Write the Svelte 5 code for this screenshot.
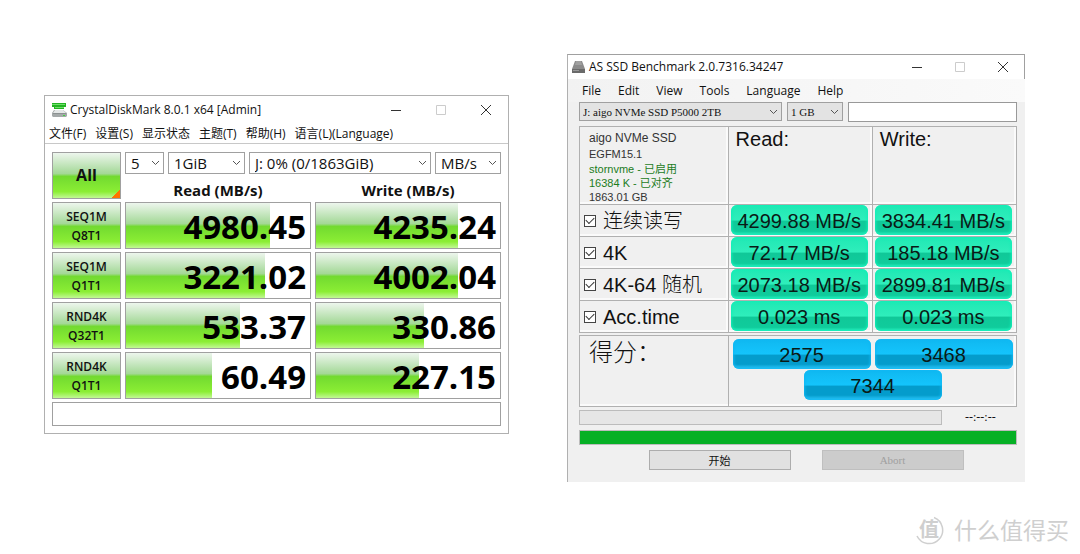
<script>
	let tests = $state([
		{ name: 'SEQ1M', queue: 'Q8T1', read: '4980.45', readBar: 78.3, write: '4235.24', writeBar: 77.4 },
		{ name: 'SEQ1M', queue: 'Q1T1', read: '3221.02', readBar: 75.5, write: '4002.04', writeBar: 77 },
		{ name: 'RND4K', queue: 'Q32T1', read: '533.37', readBar: 62, write: '330.86', writeBar: 58.5 },
		{ name: 'RND4K', queue: 'Q1T1', read: '60.49', readBar: 46.5, write: '227.15', writeBar: 56 }
	]);

	let rows = $state([
		{ id: 'seq', label: '连续读写', read: '4299.88 MB/s', write: '3834.41 MB/s', on: true },
		{ id: '4k', label: '4K', read: '72.17 MB/s', write: '185.18 MB/s', on: true },
		{ id: '4k64', label: '4K-64 随机', read: '2073.18 MB/s', write: '2899.81 MB/s', on: true },
		{ id: 'acc', label: 'Acc.time', read: '0.023 ms', write: '0.023 ms', on: true }
	]);

	const cdmMenu = ['文件(F)', '设置(S)', '显示状态', '主题(T)', '帮助(H)', '语言(L)(Language)'];
	const asMenu = ['File', 'Edit', 'View', 'Tools', 'Language', 'Help'];
</script>

{#snippet dropdown(cls, label, value)}
	<span class="dropdown {cls}">
		<select aria-label={label}>
			<option>{value}</option>
		</select>
		<svg width="9" height="6" viewBox="0 0 9 6" aria-hidden="true">
			<path d="M1 1l3.5 3.5L8 1" fill="none" stroke="#555" />
		</svg>
	</span>
{/snippet}

{#snippet windowButtons()}
	<div class="controls">
		<button aria-label="Minimize">
			<svg width="12" height="12" viewBox="0 0 12 12"><path d="M1 6.5h10" stroke="#333" /></svg>
		</button>
		<button aria-label="Maximize" disabled>
			<svg width="12" height="12" viewBox="0 0 12 12"><path d="M1.5 1.5h9v9h-9z" fill="none" stroke="#ccc" /></svg>
		</button>
		<button aria-label="Close">
			<svg width="12" height="12" viewBox="0 0 12 12"><path d="M1 1l10 10M11 1L1 11" stroke="#333" /></svg>
		</button>
	</div>
{/snippet}

<main>
	<div class="desktop">
		<section class="window cdm">
			<header class="titlebar">
				<svg class="logo" width="16" height="16" viewBox="0 0 16 16" aria-hidden="true">
					<path d="M1 1h14v4h-2v2H3V5H1z" fill="#22b422" />
					<path d="M1 2.500h13M4 5.500h9" stroke="#6fe06a" />
					<path d="M3 8h9l4 3v3l-1 1H2l-1-1v-3z" fill="#a4a9a9" />
					<path d="M4 8h8l3 3H2z" fill="#e4e7e7" />
					<path d="M2 11.500h13" stroke="#8b9191" />
					<path d="M12 13.500h2" stroke="#3dd43d" />
				</svg>
				<h1>CrystalDiskMark 8.0.1 x64 [Admin]</h1>
				{@render windowButtons()}
			</header>
			<nav class="menu">
				{#each cdmMenu as item}
					<button>{item}</button>
				{/each}
			</nav>
			<div class="grid">
				<button class="tile all">All</button>
				<div class="setup">
					<div class="selects">
						{@render dropdown('count', 'Test count', '5')}
						{@render dropdown('size', 'Test size', '1GiB')}
						{@render dropdown('drive', 'Drive', 'J: 0% (0/1863GiB)')}
						{@render dropdown('unit', 'Unit', 'MB/s')}
					</div>
					<div class="heads">
						<span>Read (MB/s)</span>
						<span>Write (MB/s)</span>
					</div>
				</div>
				{#each tests as test}
					<button class="tile">{test.name}<br />{test.queue}</button>
					<div class="meter">
						<div class="fill" style="width: {test.readBar}%"></div>
						<output>{test.read}</output>
					</div>
					<div class="meter">
						<div class="fill" style="width: {test.writeBar}%"></div>
						<output>{test.write}</output>
					</div>
				{/each}
				<input class="comment" aria-label="Comment" />
			</div>
		</section>

		<section class="window asssd">
			<header class="titlebar">
				<svg class="logo" width="15" height="14" viewBox="0 0 15 14" aria-hidden="true">
					<path d="M4 1h7l3 8H1z" fill="#8b8b8b" />
					<path d="M5 1h5l1 4H4z" fill="#a0a0a0" />
					<path d="M1 9h13v4H1z" fill="#6a6a6a" />
					<path d="M2 10.500h6" stroke="#999" />
				</svg>
				<h1>AS SSD Benchmark 2.0.7316.34247</h1>
				{@render windowButtons()}
			</header>
			<nav class="menu">
				{#each asMenu as item}
					<button>{item}</button>
				{/each}
			</nav>
			<div class="body">
				<div class="toolbar">
					{@render dropdown('disk', 'Disk', 'J: aigo NVMe SSD P5000 2TB')}
					{@render dropdown('amount', 'Size', '1 GB')}
					<input aria-label="Result" />
				</div>
				<table>
					<thead>
						<tr>
							<td class="info">
								<p class="model">aigo NVMe SSD</p>
								<p class="firmware">EGFM15.1</p>
								<p class="ok">stornvme - 已启用</p>
								<p class="ok">16384 K - 已对齐</p>
								<p>1863.01 GB</p>
							</td>
							<th>Read:</th>
							<th>Write:</th>
						</tr>
					</thead>
					<tbody>
						{#each rows as row}
							<tr>
								<td>
									<div class="check">
										<input type="checkbox" id={row.id} bind:checked={row.on} />
										<label for={row.id}>{row.label}</label>
									</div>
								</td>
								<td><div class="pill">{row.read}</div></td>
								<td><div class="pill">{row.write}</div></td>
							</tr>
						{/each}
					</tbody>
				</table>
				<div class="score">
					<h2>得分：</h2>
					<div class="points">
						<div class="pill blue">2575</div>
						<div class="pill blue">3468</div>
						<div class="pill blue">7344</div>
					</div>
				</div>
				<div class="progress">
					<div class="track"></div>
					<span>--:--:--</span>
				</div>
				<div class="track done"></div>
				<div class="actions">
					<button>开始</button>
					<button disabled>Abort</button>
				</div>
			</div>
		</section>
	</div>

	<footer>
		<span class="badge">
			<svg width="30" height="30" viewBox="0 0 30 30" aria-hidden="true">
				<path d="M20 2.500A13.500 13.500 0 1 1 3 21" fill="none" stroke="#cfcfcf" stroke-width="1.500" />
			</svg>
			<b>值</b>
		</span>
		<span>什么值得买</span>
	</footer>
</main>

<style>
	:global(body) {
		margin: 0;
		background: #fff;
	}

	main {
		font-family: 'Open Sans', 'Noto Sans CJK SC', sans-serif;
		color: #111;
	}

	main :global(*) {
		box-sizing: border-box;
	}

	button,
	input,
	select {
		margin: 0;
		padding: 0;
		font: inherit;
		color: inherit;
	}

	h1,
	h2,
	p {
		margin: 0;
		font-weight: 400;
	}

	.desktop {
		display: grid;
		grid-template-columns: 465fr 458fr;
		column-gap: 58px;
		align-items: start;
		padding: 54px 55px 0 44px;
	}

	/* ===== Window chrome ===== */
	.titlebar {
		display: flex;
		align-items: center;
		background: #fff;
	}

	.titlebar h1 {
		flex: 1;
		font-size: 12px;
		line-height: 20px;
		white-space: nowrap;
	}

	.logo {
		flex: none;
	}

	.controls {
		display: flex;
	}

	.controls button {
		display: grid;
		place-items: center;
		width: 43px;
		height: 22px;
		border: 0;
		background: none;
	}

	.menu {
		display: flex;
		font-size: 12px;
		line-height: 20px;
	}

	.menu button {
		border: 0;
		background: none;
		white-space: nowrap;
	}

	.dropdown {
		position: relative;
		display: block;
	}

	.dropdown select {
		display: block;
		width: 100%;
		height: 100%;
		padding-left: 5px;
		border: 1px solid #a0a0a0;
		border-radius: 0;
		background: #fff;
		appearance: none;
	}

	.dropdown svg {
		position: absolute;
		top: calc(50% - 3px);
		right: 4px;
		pointer-events: none;
	}

	/* ===== CrystalDiskMark ===== */
	.cdm {
		margin-top: 41px;
		border: 1px solid #b0b0b0;
		background: #fff;
	}

	.cdm .titlebar {
		height: 28px;
		padding: 0 1px 0 6px;
		gap: 3px;
	}

	.cdm .controls {
		gap: 2px;
	}

	.cdm .menu {
		height: 20px;
		padding-left: 4px;
		gap: 9px;
		border-bottom: 1px solid #c8c8c8;
	}

	.grid {
		display: grid;
		grid-template-columns: 69px 1fr 1fr;
		grid-template-rows: repeat(5, 47px) 24px;
		gap: 3px 4px;
		padding: 8px 7px 7px;
	}

	.tile {
		border: 1px solid #a0a0a0;
		background: linear-gradient(#edf6ed, #a3d896 46%, #72da30 52%, #8bee34 86%, #c2f895);
		font-size: 12px;
		font-weight: 600;
		line-height: 19px;
	}

	.all {
		background:
			linear-gradient(135deg, transparent 50%, #ff7300 50%) right bottom / 9px 9px no-repeat,
			linear-gradient(#edf6ed, #a3d896 46%, #72da30 52%, #8bee34 86%, #c2f895);
		font-size: 16px;
		font-weight: 700;
	}

	.setup {
		grid-column: span 2;
		display: flex;
		flex-direction: column;
	}

	.selects {
		display: flex;
		gap: 4px;
		height: 24px;
		font-size: 15px;
	}

	.count {
		width: 39px;
	}

	.size {
		width: 77px;
	}

	.drive {
		flex: 1;
	}

	.unit {
		width: 66px;
	}

	.heads {
		display: grid;
		grid-template-columns: 1fr 1fr;
		column-gap: 4px;
		padding-top: 4px;
		font-size: 15px;
		font-weight: 700;
		line-height: 24px;
		text-align: center;
	}

	.meter {
		display: grid;
		border: 1px solid #a0a0a0;
	}

	.meter > * {
		grid-area: 1 / 1;
	}

	.fill {
		background: linear-gradient(#edf6ed, #a3d896 46%, #72da30 52%, #8bee34 86%, #c2f895);
	}

	.meter output {
		height: 45px;
		padding-right: 4px;
		color: #000;
		font-size: 33px;
		font-weight: 700;
		line-height: 48px;
		text-align: right;
	}

	.comment {
		grid-column: 1 / -1;
		border: 1px solid #a0a0a0;
	}

	/* ===== AS SSD ===== */
	.asssd {
		border-top: 1px solid #a0a0a0;
		border-left: 1px solid #b0b0b0;
		background: #f0f0f0;
	}

	.asssd .titlebar {
		height: 24px;
		padding-left: 3px;
		gap: 3px;
		border-right: 1px solid #a0a0a0;
	}

	.asssd .menu {
		height: 23px;
		padding-left: 14px;
		gap: 17px;
		background: linear-gradient(90deg, #f2f2f2, #fafafa);
	}

	.body {
		padding: 0 8px 12px 11px;
	}

	.toolbar {
		display: flex;
		gap: 5px;
		font-family: 'Liberation Serif', 'Noto Sans CJK SC', serif;
		font-size: 11px;
	}

	.toolbar .dropdown {
		height: 19px;
	}

	.toolbar select {
		padding-left: 3px;
		background: #e3e3e3;
	}

	.disk {
		width: 203px;
	}

	.amount {
		width: 56px;
	}

	.toolbar input {
		flex: 1;
		min-width: 0;
		height: 20px;
		border: 1px solid #999;
	}

	table {
		width: 100%;
		margin-top: 4px;
		border-collapse: collapse;
		table-layout: fixed;
		font-family: 'Liberation Sans', 'Noto Sans CJK SC', sans-serif;
		font-size: 20px;
	}

	td,
	th {
		padding: 0;
		border: 1px solid #b0b0b0;
		box-shadow: inset -2px -2px #fafafa;
	}

	th {
		height: 77px;
		padding: 1px 7px;
		font-weight: 400;
		line-height: 22px;
		text-align: left;
		vertical-align: top;
	}

	.info {
		width: 34%;
		padding: 3px 0 0 9px;
		color: #333;
		font-size: 11px;
		line-height: 14px;
		vertical-align: top;
	}

	.model {
		font-size: 12px;
		line-height: 16px;
	}

	.firmware {
		line-height: 16px;
	}

	.ok {
		color: #1c7c1c;
	}

	.check {
		display: flex;
		align-items: center;
		gap: 7px;
		padding-left: 4px;
		line-height: 30px;
	}

	.check input {
		display: grid;
		place-items: center;
		width: 12px;
		height: 12px;
		border: 1px solid #444;
		background: #fff;
		appearance: none;
	}

	.check input:checked::after {
		content: '';
		width: 7px;
		height: 4px;
		margin-bottom: 2px;
		border: solid #333;
		border-width: 0 0 1px 1px;
		transform: rotate(-45deg);
	}

	.check label {
		font-weight: 300;
	}

	.pill {
		height: 30px;
		margin: 0 4px 1px 2px;
		border-radius: 6px;
		background: linear-gradient(#20e8b4, #2feebb 50%, #10c898 54%, #10cc9c 88%, #30e8bc);
		box-shadow: inset 0 0 3px 1px #10f0b8;
		color: #0a1a16;
		font-size: 20px;
		line-height: 32px;
		text-align: center;
	}

	.score {
		display: grid;
		grid-template-columns: 34% 1fr;
		height: 72px;
		margin-top: 2px;
		border: 1px solid #b0b0b0;
		box-shadow: inset -2px -2px #fafafa;
	}

	.score h2 {
		padding-left: 9px;
		font-size: 24px;
		font-weight: 300;
		line-height: 32px;
	}

	.points {
		display: flex;
		flex-wrap: wrap;
		align-content: flex-start;
		justify-content: center;
		gap: 1px 4px;
		padding-top: 3px;
		border-left: 1px solid #b0b0b0;
		font-family: 'Liberation Sans', sans-serif;
	}

	.blue {
		width: 138px;
		margin: 0;
		background: linear-gradient(#10b8f0, #14c4fc 50%, #049ccc 54%, #049ccc 84%, #30c8f8);
		box-shadow: inset 0 0 3px 1px #10b8f4;
	}

	.progress {
		display: flex;
		align-items: center;
		gap: 23px;
		margin-top: 3px;
		font-family: 'Liberation Serif', serif;
		font-size: 12px;
		line-height: 15px;
	}

	.progress span {
		width: 52px;
	}

	.track {
		flex: 1;
		height: 15px;
		border: 1px solid #bcbcbc;
		background: #e6e6e6;
	}

	.done {
		margin-top: 5px;
		background: #06b025;
	}

	.actions {
		display: flex;
		justify-content: center;
		gap: 31px;
		padding: 5px 0 0 16px;
		font-family: 'Liberation Mono', 'Noto Sans CJK SC', monospace;
		font-size: 11px;
	}

	.actions button {
		width: 142px;
		height: 20px;
		border: 1px solid #adadad;
		background: #e1e1e1;
	}

	.actions button:disabled {
		border-color: #bfbfbf;
		background: #ccc;
		color: #a0a0a0;
		font-family: 'Liberation Serif', serif;
	}

	/* ===== Watermark ===== */
	footer {
		display: flex;
		align-items: center;
		justify-content: flex-end;
		gap: 10px;
		padding: 33px 11px 0 0;
		color: #cfcfcf;
		font-size: 23px;
		line-height: 30px;
	}

	.badge {
		display: grid;
		place-items: center;
		font-size: 20px;
	}

	.badge > * {
		grid-area: 1 / 1;
	}
</style>
